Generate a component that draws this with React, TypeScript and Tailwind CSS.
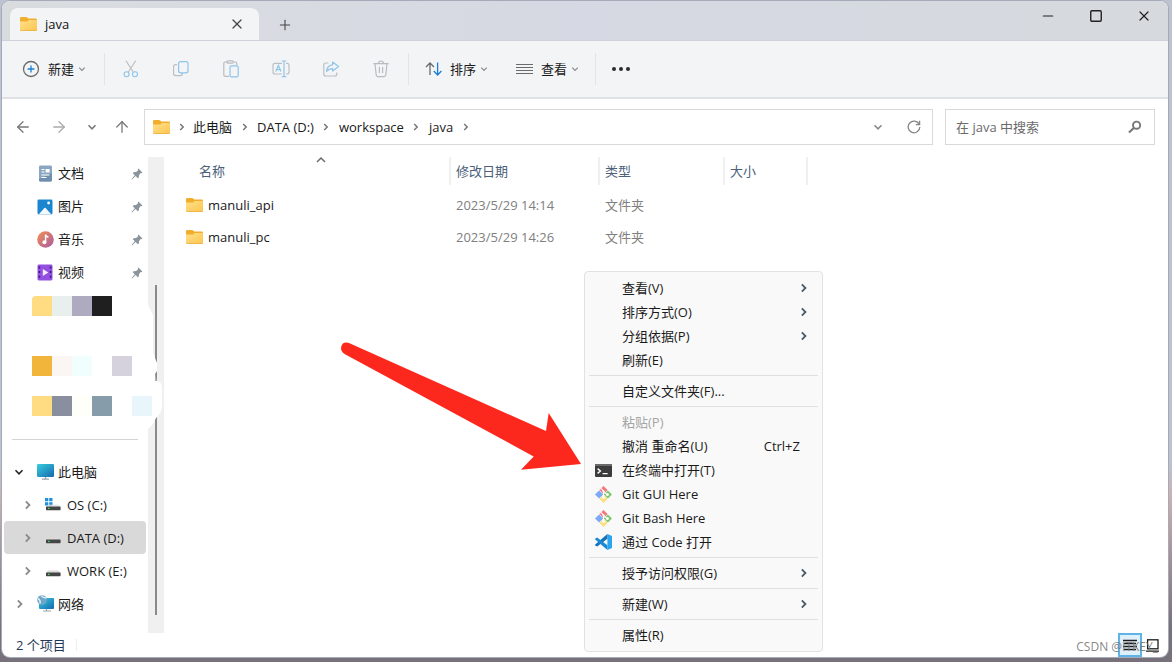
import React from "react";

// icon import
import { ArrowLeft, ArrowRight, ArrowUp, X, Plus, Minus, Square } from "lucide-react";

interface IChevronProps {
  className?: string;
  dir?: "right" | "down" | "up";
}

const Chevron: React.FunctionComponent<IChevronProps> = ({
  className = "w-2.5 h-2.5 text-[#777]",
  dir = "right",
}) => {
  const paths = {
    right: "M3.2 2 6.2 5 3.2 8",
    down: "M1.5 3.2 5 6.8 8.5 3.2",
    up: "M1 7 5 3 9 7",
  };
  return (
    <svg viewBox="0 0 10 10" className={className} fill="none" stroke="currentColor" strokeWidth="1.5">
      <path d={paths[dir]} />
    </svg>
  );
};

const FolderIcon = () => (
  <svg viewBox="0 0 17 14" className="w-[17px] h-3.5 shrink-0">
    <defs>
      <linearGradient id="folder" x1="0" y1="0" x2="1" y2="1">
        <stop offset="0" stopColor="#ffe08a" />
        <stop offset="1" stopColor="#fbc550" />
      </linearGradient>
    </defs>
    <path d="M0 1.2Q0 0 1.2 0H6q.8 0 1.3.6L8.2 1.6H15.6Q17 1.6 17 3V7H0Z" fill="#f0ad2e" />
    <path d="M0 4.6H6.6q.6 0 1-.4L9 3H16q1 0 1 1V12.8q0 1.2-1.2 1.2H1.2Q0 14 0 12.8Z" fill="url(#folder)" />
    <path d="M.4 13.5H16.6" stroke="#e9ae3c" strokeWidth=".7" />
  </svg>
);

// toolbar icons
const NewIcon = () => (
  <svg viewBox="0 0 18 18" className="w-[18px] h-[18px]" fill="none">
    <circle cx="9" cy="9" r="7.5" stroke="#6b6b6b" strokeWidth="1.3" />
    <path d="M9 5.6v6.8M5.6 9h6.8" stroke="#1a7fd4" strokeWidth="1.3" />
  </svg>
);

const CutIcon = () => (
  <svg viewBox="0 0 18 18" className="w-[18px] h-[18px]" fill="none" strokeWidth="1.1">
    <path d="M4 .8 11.2 12M13.6.8 6.4 12" stroke="#b9bbbe" />
    <circle cx="4.6" cy="14.3" r="2.5" stroke="#8fc4ea" />
    <circle cx="13" cy="14.3" r="2.5" stroke="#8fc4ea" />
  </svg>
);

const CopyIcon = () => (
  <svg viewBox="0 0 18 18" className="w-[18px] h-[18px]" fill="none" strokeWidth="1.2">
    <path d="M5 4.6H3.6Q1.6 4.6 1.6 6.6V13.6q0 2 2 2H8.4q2 0 2-2V13" stroke="#bcbec1" />
    <rect x="6.6" y="1.6" width="9.4" height="11.2" rx="2" stroke="#8fc4ea" />
  </svg>
);

const PasteIcon = () => (
  <svg viewBox="0 0 18 18" className="w-[18px] h-[18px]" fill="none" strokeWidth="1.2">
    <path d="M7 16.4H3.4q-1.6 0-1.6-1.6V3.6Q1.8 2 3.4 2H5M11.4 2h1.8q1.6 0 1.6 1.4V5" stroke="#b9bbbe" />
    <rect x="5" y=".8" width="6.4" height="2.4" rx="1.2" stroke="#b9bbbe" />
    <rect x="8" y="5.8" width="8.2" height="11" rx="1.4" stroke="#8fc4ea" />
  </svg>
);

const RenameIcon = () => (
  <svg viewBox="0 0 18 18" className="w-[18px] h-[18px]" fill="none" strokeWidth="1.2">
    <path d="M10 3.4H3Q1 3.4 1 5.4V12q0 2 2 2H10M14 3.4h1q2 0 2 2V12q0 2-2 2H14" stroke="#bcbec1" />
    <path d="M12 1V16.6M9.8 1h4.4M9.8 16.6h4.4M3.8 11.6 6.4 5.4 9 11.6M4.6 9.6H8.2" stroke="#8fc4ea" />
  </svg>
);

const ShareIcon = () => (
  <svg viewBox="0 0 18 18" className="w-[18px] h-[18px]" fill="none" strokeWidth="1.2" strokeLinejoin="round">
    <path d="M6.4 3H3.8Q1.8 3 1.8 5v9q0 2 2 2h9q2 0 2-2v-1.4" stroke="#bcbec1" />
    <path d="M10.6 2 16.6 6.6 10.6 11V8.6Q7 8.4 4.6 11.4 5 5.4 10.6 4.8Z" stroke="#8fc4ea" />
  </svg>
);

const TrashIcon = () => (
  <svg viewBox="0 0 18 18" className="w-[18px] h-[18px]" fill="none" stroke="#b9bbbe" strokeWidth="1.2">
    <path d="M1.4 3.6H16.6M6.6 3.4Q6.6 1 9 1t2.4 2.4M3 3.6 4.2 15q.2 1.6 1.8 1.6h6q1.6 0 1.8-1.6L15 3.6M7.4 7v6M10.6 7v6" />
  </svg>
);

const SortIcon = () => (
  <svg viewBox="0 0 18 16" className="w-[18px] h-4" fill="none" strokeWidth="1.3">
    <path d="M5 14V2M1 6 5 2 9 6" stroke="#6a6a6a" />
    <path d="M12.6 1.6V14M8.8 10l3.8 4 3.8-4" stroke="#1a7fd4" />
  </svg>
);

const ViewIcon = () => (
  <svg viewBox="0 0 18 16" className="w-[18px] h-4" stroke="#6a6a6a" strokeWidth="1.1">
    <path d="M0 3.5h17M0 6.5h17M0 9.5h17M0 12.5h17" />
  </svg>
);

// sidebar icons
const PinIcon = () => (
  <svg viewBox="0 0 12 12" className="w-3 h-3" fill="#8b949b">
    <path d="M7.4.6 11.4 4.4 10.4 5.2 9.6 5 8 7.2 7.8 9.4 6.8 10.2 4.6 8 1 11.4.6 11 3.8 7.2 1.8 5.2 2.6 4.2 5 4 7 2.4 6.8 1.4Z" />
  </svg>
);

const DocIcon = () => (
  <svg viewBox="0 0 16 17" className="w-4 h-[17px]">
    <rect x="2" y=".5" width="13" height="16" rx="1.4" fill="#8ba6c2" />
    <path d="M2 14 15 8v7q0 1.5-1.4 1.5H3.4Q2 16.5 2 15Z" fill="#6f8dad" />
    <path d="M4.5 4.5h3M4.5 7h3M4.5 10h8M4.5 12.5h5" stroke="#fff" strokeWidth="1.2" />
    <rect x="8.6" y="4" width="4" height="3.5" fill="#fff" />
  </svg>
);

const PictureIcon = () => (
  <svg viewBox="0 0 16 16" className="w-4 h-4">
    <rect x=".5" y=".5" width="15" height="15" rx="1.4" fill="#1b86cf" />
    <path d="M1.6 15.5 7.4 9q.6-.6 1.2 0l5.8 6.5Z" fill="#f4faff" />
    <circle cx="11.6" cy="4" r="1.4" fill="#fff" />
  </svg>
);

const MusicIcon = () => (
  <svg viewBox="0 0 17 17" className="w-[17px] h-[17px]">
    <defs>
      <linearGradient id="music" x1="0" y1="0" x2="1" y2="1">
        <stop offset="0" stopColor="#f59050" />
        <stop offset="1" stopColor="#a85aa5" />
      </linearGradient>
    </defs>
    <circle cx="8.5" cy="8.5" r="8.3" fill="url(#music)" />
    <circle cx="7.4" cy="11.2" r="2" fill="#fff" />
    <path d="M8.6 11V3.6Q9 5.4 11.4 6.2" stroke="#fff" strokeWidth="1.5" fill="none" />
  </svg>
);

const VideoIcon = () => (
  <svg viewBox="0 0 16 17" className="w-4 h-[17px]">
    <rect x=".5" y=".5" width="15" height="16" rx="1.4" fill="#9350e0" />
    <path d="M2.4 2.5v12M13.6 2.5v12" stroke="#3b1a73" strokeWidth="1.6" strokeDasharray="2 2.6" />
    <path d="M5.8 5 11.4 8.5 5.8 12Z" fill="#f3ebff" />
  </svg>
);

const PcIcon = () => (
  <svg viewBox="0 0 17 16" className="w-[17px] h-4">
    <defs>
      <linearGradient id="screen" x1="0" y1="0" x2="1" y2="1">
        <stop offset="0" stopColor="#36cfdc" />
        <stop offset="1" stopColor="#1668b0" />
      </linearGradient>
    </defs>
    <rect width="17" height="13" rx="1.2" fill="url(#screen)" />
    <path d="M8.5 13v2M5 15.2h7" stroke="#9aa4ac" strokeWidth="1.3" />
  </svg>
);

const NetworkIcon = () => (
  <svg viewBox="0 0 17 17" className="w-[17px] h-[17px]">
    <rect x="2" y="3" width="15" height="11" rx="1" fill="url(#screen)" />
    <path d="M9.5 14v1.6M6 16h8" stroke="#9aa4ac" strokeWidth="1.2" />
    <circle cx="5" cy="5" r="4.8" fill="#6fa6ca" />
    <path d="M1 3.4Q4 5.6 3 8.6M4 .6Q6 3 9.4 3" stroke="#dcecf5" strokeWidth="1.4" fill="none" />
  </svg>
);

const DriveIcon = ({ system = false }: { system?: boolean }) => (
  <svg viewBox="0 0 16 14" className="w-4 h-3.5">
    {system && (
      <path d="M0 0h3.3v3.3H0ZM4.2 0h3.3v3.3H4.2ZM0 4.2h3.3v3.3H0ZM4.2 4.2h3.3v3.3H4.2Z" fill="#1f8fe0" />
    )}
    <path d="M3 6.6h10.4L15.4 9H1Z" fill="#dadada" className={system ? "opacity-60" : ""} />
    <rect x="1" y="8.4" width="14.6" height="3.8" rx=".6" fill="#454545" />
    <rect x="3" y="9.8" width="1.6" height="1.2" fill="#3fdc6a" />
  </svg>
);

// context menu icons
const TerminalIcon = () => (
  <svg viewBox="0 0 17 13" className="w-[17px] h-[13px]">
    <rect width="17" height="13" rx="1" fill="#3c3c3c" />
    <rect width="17" height="2" fill="#6a6a6a" />
    <path d="M2.6 4.6 5.4 7 2.6 9.4M7.6 9.6h5" stroke="#fff" strokeWidth="1.4" fill="none" />
  </svg>
);

const GitIcon = () => (
  <svg viewBox="0 0 17 17" className="w-[17px] h-[17px]">
    <path d="M8.5 0 12.6 4.1 8.5 8.2 4.4 4.1Z" fill="#f2787e" />
    <path d="M4.1 4.4 8.2 8.5 4.1 12.6 0 8.5Z" fill="#7daaf7" />
    <path d="M12.9 4.4 17 8.5 12.9 12.6 8.8 8.5Z" fill="#7bc96a" />
    <path d="M8.5 8.8 12.6 12.9 8.5 17 4.4 12.9Z" fill="#fbdf85" />
    <path d="M5.6 2.2 11.8 8.4M8.5 5.4V11.6" stroke="#fff" strokeWidth="1.1" />
    <circle cx="8.5" cy="5.3" r="1.1" fill="#fff" />
    <circle cx="8.5" cy="11.6" r="1.3" fill="#fff" />
    <circle cx="12.4" cy="8.6" r="1.5" fill="#fff" />
  </svg>
);

const CodeIcon = () => (
  <svg viewBox="0 0 17 16" className="w-[17px] h-4">
    <path d="M12.4 0 17 2V14L12.4 16Z" fill="#2aa5ee" />
    <path d="M12.4 0V4.8L2.2 12.6.2 11.4V10.4Z" fill="#1673ba" />
    <path d="M12.4 16V11.2L2.2 3.4.2 4.6V5.6Z" fill="#1b8ad6" />
  </svg>
);

const SearchIcon = () => (
  <svg viewBox="0 0 14 14" className="w-3.5 h-3.5 shrink-0" fill="none" stroke="#777">
    <circle cx="8.6" cy="5.2" r="3.6" strokeWidth="1.9" />
    <path d="M5.8 8 1 12.6" strokeWidth="2.1" />
  </svg>
);

const RefreshIcon = () => (
  <svg viewBox="0 0 14 14" className="w-3.5 h-3.5" fill="none" stroke="#858585" strokeWidth="1.3">
    <path d="M12.2 4.4A5.8 5.8 0 1 0 12.8 7M12.6.8V4.6H8.8" />
  </svg>
);

const actions = [
  { label: "剪切", icon: <CutIcon /> },
  { label: "复制", icon: <CopyIcon /> },
  { label: "粘贴", icon: <PasteIcon /> },
  { label: "重命名", icon: <RenameIcon /> },
  { label: "共享", icon: <ShareIcon /> },
  { label: "删除", icon: <TrashIcon /> },
];

const crumbs = ["此电脑", "DATA (D:)", "workspace", "java"];

const quickAccess = [
  { name: "文档", icon: <DocIcon /> },
  { name: "图片", icon: <PictureIcon /> },
  { name: "音乐", icon: <MusicIcon /> },
  { name: "视频", icon: <VideoIcon /> },
];

const drives = [
  { name: "OS (C:)", system: true },
  { name: "DATA (D:)", active: true },
  { name: "WORK (E:)" },
];

const files = [
  { name: "manuli_api", date: "2023/5/29 14:14", type: "文件夹" },
  { name: "manuli_pc", date: "2023/5/29 14:26", type: "文件夹" },
];

interface IMenuItem {
  label: string;
  icon?: React.ReactNode;
  sub?: boolean;
  disabled?: boolean;
  shortcut?: string;
}

const menuGroups: IMenuItem[][] = [
  [
    { label: "查看(V)", sub: true },
    { label: "排序方式(O)", sub: true },
    { label: "分组依据(P)", sub: true },
    { label: "刷新(E)" },
  ],
  [{ label: "自定义文件夹(F)..." }],
  [
    { label: "粘贴(P)", disabled: true },
    { label: "撤消 重命名(U)", shortcut: "Ctrl+Z" },
    { label: "在终端中打开(T)", icon: <TerminalIcon /> },
    { label: "Git GUI Here", icon: <GitIcon /> },
    { label: "Git Bash Here", icon: <GitIcon /> },
    { label: "通过 Code 打开", icon: <CodeIcon /> },
  ],
  [{ label: "授予访问权限(G)", sub: true }],
  [{ label: "新建(W)", sub: true }],
  [{ label: "属性(R)" }],
];

const TitleBar = () => (
  <header className="flex h-10 items-end border-b border-[#cdd1d9] bg-linear-to-r from-[#d9dcdf] via-[#d6d9e3] to-[#d6dade] pl-2">
    <div className="flex h-8 w-[249px] items-center rounded-t-lg bg-[#f2f4f6] pl-2.5 pr-3.5">
      <FolderIcon />
      <span className="ml-2 flex-1 text-[#111]">java</span>
      <button aria-label="关闭标签页">
        <X className="h-4 w-4 text-[#444]" strokeWidth={1.8} />
      </button>
    </div>
    <button aria-label="新标签页" className="mb-[7px] ml-[18px]">
      <Plus className="h-4 w-4 text-[#444]" strokeWidth={1.6} />
    </button>
    <div className="ml-auto flex self-start pt-[7px]">
      <button aria-label="最小化" className="flex w-12 justify-center">
        <Minus className="h-4 w-4 text-[#222]" strokeWidth={1.8} />
      </button>
      <button aria-label="最大化" className="flex w-12 items-center justify-center">
        <Square className="h-3.5 w-3.5 text-[#222]" strokeWidth={2.4} />
      </button>
      <button aria-label="关闭" className="flex w-12 justify-center">
        <X className="h-4 w-4 text-[#222]" strokeWidth={1.8} />
      </button>
    </div>
  </header>
);

const Toolbar = () => (
  <div className="flex h-[58px] items-center border-b-2 border-[#dfe1e4] bg-[#f2f4f6] pl-5">
    <button className="flex items-center pr-4">
      <NewIcon />
      <span className="ml-2">新建</span>
      <Chevron dir="down" className="ml-1 h-2 w-2 text-[#8a8a8a]" />
    </button>
    <div className="ml-0.5 h-8 w-px bg-[#e2e4e6]" />
    <div className="flex px-px">
      {actions.map((action) => (
        <button key={action.label} aria-label={action.label} disabled className="flex w-[50px] justify-center">
          {action.icon}
        </button>
      ))}
    </div>
    <div className="ml-px h-8 w-px bg-[#e2e4e6]" />
    <button className="flex items-center pl-4">
      <SortIcon />
      <span className="ml-[7px]">排序</span>
      <Chevron dir="down" className="ml-1 h-2 w-2 text-[#8a8a8a]" />
    </button>
    <button className="flex items-center pl-7 pr-4">
      <ViewIcon />
      <span className="ml-[7px]">查看</span>
      <Chevron dir="down" className="ml-1 h-2 w-2 text-[#8a8a8a]" />
    </button>
    <div className="h-8 w-px bg-[#e2e4e6]" />
    <button aria-label="更多" className="flex gap-[3px] px-4">
      <span className="h-1 w-1 rounded-full bg-[#2b2b2b]" />
      <span className="h-1 w-1 rounded-full bg-[#2b2b2b]" />
      <span className="h-1 w-1 rounded-full bg-[#2b2b2b]" />
    </button>
  </div>
);

const AddressBar = () => (
  <div className="flex items-center pb-3 pl-[3px] pr-[13px] pt-2.5">
    <button aria-label="后退" className="flex w-9 justify-center">
      <ArrowLeft className="h-[18px] w-[18px] text-[#777]" strokeWidth={1.7} />
    </button>
    <button aria-label="前进" className="flex w-9 justify-center">
      <ArrowRight className="h-[18px] w-[18px] text-[#aaa]" strokeWidth={1.7} />
    </button>
    <button aria-label="最近位置" className="flex w-[30px] justify-center">
      <Chevron dir="down" />
    </button>
    <button aria-label="向上" className="flex w-[30px] justify-center">
      <ArrowUp className="h-[18px] w-[18px] text-[#777]" strokeWidth={1.7} />
    </button>
    <nav className="ml-[7px] flex h-9 flex-1 items-center border border-[#d9d9d9] pb-px pl-2">
      <FolderIcon />
      <span className="flex w-[23px] justify-center">
        <Chevron />
      </span>
      {crumbs.map((crumb) => (
        <React.Fragment key={crumb}>
          <a href="#">{crumb}</a>
          <span className="flex w-[25px] justify-center">
            <Chevron />
          </span>
        </React.Fragment>
      ))}
      <button aria-label="历史记录" className="ml-auto flex w-9 justify-center">
        <Chevron dir="down" className="h-2.5 w-2.5 text-[#888]" />
      </button>
      <button aria-label="刷新" className="flex w-9 justify-center">
        <RefreshIcon />
      </button>
    </nav>
    <label className="ml-3 flex h-9 w-[210px] items-center border border-[#d9d9d9] pl-2.5 pr-3">
      <input
        type="text"
        aria-label="搜索"
        placeholder="在 java 中搜索"
        className="min-w-0 flex-1 outline-none placeholder:text-[#6b6b6b]"
      />
      <SearchIcon />
    </label>
  </div>
);

const Sidebar = () => (
  <aside className="flex">
    <div className="w-[146px]">
      {quickAccess.map((item) => (
        <a key={item.name} href="#" className="flex h-[33px] items-center pl-[34px]">
          <span className="flex w-[18px] justify-center">{item.icon}</span>
          <span className="ml-1 flex-1 pb-0.5">{item.name}</span>
          <PinIcon />
          <span className="w-[5px]" />
        </a>
      ))}

      {/* pixelated entries */}
      <div className="relative z-10 pl-[30px] pt-[7px]">
        <div className="flex h-5">
          <span className="w-5 rounded-tl-sm bg-[#ffdb82]" />
          <span className="w-5 bg-[#e9efec]" />
          <span className="w-5 bg-[#aeabc0]" />
          <span className="w-5 bg-[#1f1f1f]" />
        </div>
        <div className="mt-10 flex h-5">
          <span className="w-5 bg-[#f2b53b]" />
          <span className="w-5 bg-[#fbf6f3]" />
          <span className="w-5 bg-[#f0fffe]" />
          <span className="ml-5 w-5 bg-[#d5d2de]" />
        </div>
        <div className="mt-5 flex h-5">
          <span className="w-5 shrink-0 bg-[#ffdb82]" />
          <span className="w-5 shrink-0 bg-[#8a8fa0]" />
          <span className="w-5 shrink-0 bg-[#fefff8]" />
          <span className="w-5 shrink-0 bg-[#879cab]" />
          <span className="ml-5 w-5 shrink-0 bg-[#e8f5fb]" />
        </div>
      </div>
      <div className="mb-[15px] ml-2.5 mr-2.5 mt-[23px] h-px bg-[#d4d4d4]" />

      <a href="#" className="flex h-[33px] items-center pl-3">
        <Chevron dir="down" className="h-2.5 w-2.5 text-[#222]" />
        <span className="ml-3 flex w-[18px] justify-center">
          <PcIcon />
        </span>
        <span className="ml-1">此电脑</span>
      </a>
      {drives.map((drive) => (
        <a
          key={drive.name}
          href="#"
          className={
            drive.active
              ? "ml-0.5 mr-0.5 flex h-[33px] items-center rounded-sm bg-[#d9d9d9] pl-[18px]"
              : "ml-0.5 flex h-[33px] items-center pl-[18px]"
          }
        >
          <Chevron className="h-3 w-3 text-[#8a8a8a]" />
          <span className="ml-2.5 flex w-[18px] justify-center">
            <DriveIcon system={drive.system} />
          </span>
          <span className="ml-[5px] whitespace-nowrap">{drive.name}</span>
        </a>
      ))}
      <a href="#" className="flex h-[33px] items-center pl-3">
        <Chevron className="h-3 w-3 text-[#8a8a8a]" />
        <span className="ml-2.5 flex w-[18px] justify-center">
          <NetworkIcon />
        </span>
        <span className="ml-1">网络</span>
      </a>
    </div>

    {/* scrollbar, partly wiped out next to the pixelated entries */}
    <div className="relative w-4 bg-[#f0f0f0]">
      <svg viewBox="0 0 16 476" className="absolute left-0 top-0 h-[476px] w-4">
        <path d="M8 128V458" stroke="#8a8a8a" strokeWidth="2" />
        <path d="M0 148 5 158V196L9 206V214L7 217 9 224Q14 224 14 232V248Q14 256 8 261L5 267 0 272Z" fill="#fff" />
        <path d="M8 217V224" stroke="#8a8a8a" strokeWidth="1.4" />
      </svg>
    </div>
  </aside>
);

const FileTable = () => (
  <main className="min-w-0 flex-1 pl-[22px]">
    <table className="table-fixed border-collapse text-left">
      <thead>
        <tr className="h-8 align-top text-[#4c607a]">
          <th className="relative w-[265px] p-0 font-normal">
            <div className="flex h-7 items-center border-r-2 border-[#f0f0f0] pl-[13px]">名称</div>
            <Chevron dir="up" className="absolute left-[130px] top-[-2px] h-2.5 w-2.5 text-[#6b6b6b]" />
          </th>
          <th className="w-[149px] p-0 font-normal">
            <div className="flex h-7 items-center border-r-2 border-[#f0f0f0] pl-[5px]">修改日期</div>
          </th>
          <th className="w-[125px] p-0 font-normal">
            <div className="flex h-7 items-center border-r-2 border-[#f0f0f0] pl-[5px]">类型</div>
          </th>
          <th className="w-[83px] p-0 font-normal">
            <div className="flex h-7 items-center border-r-2 border-[#f0f0f0] pl-[5px]">大小</div>
          </th>
        </tr>
      </thead>
      <tbody>
        {files.map((file) => (
          <tr key={file.name} className="h-8 text-[#808080]">
            <td className="p-0">
              <div className="flex items-center gap-[5px] text-[#1a1a1a]">
                <FolderIcon />
                {file.name}
              </div>
            </td>
            <td className="p-0 pl-[5px]">{file.date}</td>
            <td className="p-0 pl-[5px]">{file.type}</td>
            <td className="p-0" />
          </tr>
        ))}
      </tbody>
    </table>
  </main>
);

const StatusBar = () => (
  <footer className="relative flex h-6 items-center pl-3.5">
    <span className="text-[#1f3858]">2 个项目</span>
    <span className="ml-2.5 h-3 w-px bg-[#eee]" />
    <button
      aria-label="详细信息"
      className="ml-auto flex h-6 w-6 items-center justify-center border-2 border-[#5db4e8] bg-[#dff0fa]"
    >
      <svg viewBox="0 0 14 12" className="h-3 w-3.5" stroke="#1c1c1c" strokeWidth="1.4">
        <path d="M0 1.5h14M1 4.5h12M0 7.5h14M1 10.5h12" />
      </svg>
    </button>
    <button aria-label="大图标" className="ml-1 mr-[9px]">
      <svg viewBox="0 0 13 13" className="h-[13px] w-[13px]" stroke="#1c1c1c" strokeWidth="1.3" fill="none">
        <rect x="1.6" y=".8" width="10.4" height="9" />
        <path d="M0 12.2h13" />
      </svg>
    </button>
    <span className="absolute right-2.5 top-1 text-xs leading-5 text-[#777]/90">CSDN @ITKEY_</span>
  </footer>
);

const ContextMenu = () => (
  <div
    role="menu"
    className="absolute left-[584px] top-[271px] z-20 w-[239px] rounded-sm border border-[#e2e2e2] bg-[#f9f9f9] px-1 py-1"
  >
    {menuGroups.map((group, index) => (
      <div key={index} className={index > 0 ? "mt-[3px] border-t border-[#e0e0e0] pt-[3px]" : ""}>
        {group.map((item) => (
          <button
            key={item.label}
            role="menuitem"
            disabled={item.disabled}
            className="flex h-6 w-full items-center pr-2 text-left disabled:text-[#a5a5a5]"
          >
            <span className="flex w-[33px] pl-1.5">{item.icon}</span>
            <span className="flex-1">{item.label}</span>
            {item.shortcut && <span className="mr-2.5">{item.shortcut}</span>}
            {item.sub && <Chevron className="h-3 w-3 text-[#4a5a66]" />}
          </button>
        ))}
      </div>
    ))}
  </div>
);

const PointerArrow = () => (
  <svg viewBox="0 0 240 130" className="absolute left-[341px] top-[341px] z-20 h-[130px] w-[240px]" fill="#fd281d">
    <path d="M8 2 205 90 207.7 72 240 123 180 128.8 192.7 115.4 4 13.3Q0 11 0 7 1 0 8 2Z" />
  </svg>
);

const App: React.FunctionComponent = () => {
  return (
    <div className="relative flex min-h-screen flex-col bg-linear-to-b from-[#bcc2d0] from-70% via-[#cbb0b2] via-75% to-[#77717c] to-95% pb-[5px] pl-0.5 pr-1 pt-px font-['Open_Sans','Noto_Sans_CJK_SC',sans-serif] text-[13px] leading-5 text-[#1a1a1a]">
      <div className="flex flex-1 flex-col overflow-hidden rounded-lg bg-white ring-1 ring-[#a5aab8]">
        <TitleBar />
        <Toolbar />
        <AddressBar />
        <div className="flex flex-1">
          <Sidebar />
          <FileTable />
        </div>
        <StatusBar />
      </div>
      <ContextMenu />
      <PointerArrow />
    </div>
  );
};

export default App;
